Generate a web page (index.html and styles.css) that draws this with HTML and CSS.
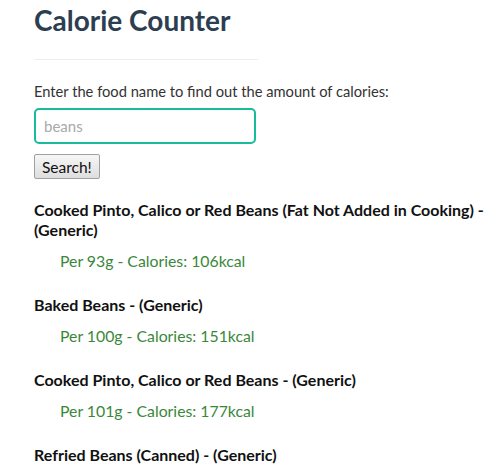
FILE: index.html
```html
<!DOCTYPE html>
<html>
<head>
<meta charset="utf-8">
<link rel="stylesheet" href="styles.css">
</head>
<body>
<div class="container">
  <h1 class="title">Calorie Counter</h1>
  <hr class="rule">
  <p class="prompt">Enter the food name to find out the amount of calories:</p>
  <input class="search" type="text" placeholder="beans">
  <div><button class="btn">Search!</button></div>
  <div class="results">
    <div class="item">
      <h4 class="name">Cooked Pinto, Calico or Red Beans (Fat Not Added in Cooking) - (Generic)</h4>
      <p class="kcal">Per 93g - Calories: 106kcal</p>
    </div>
    <div class="item">
      <h4 class="name">Baked Beans - (Generic)</h4>
      <p class="kcal">Per 100g - Calories: 151kcal</p>
    </div>
    <div class="item">
      <h4 class="name">Cooked Pinto, Calico or Red Beans - (Generic)</h4>
      <p class="kcal">Per 101g - Calories: 177kcal</p>
    </div>
    <div class="item">
      <h4 class="name">Refried Beans (Canned) - (Generic)</h4>
      <p class="kcal">Per 100g - Calories: 183kcal</p>
    </div>
  </div>
</div>
</body>
</html>
```
FILE: styles.css
```css
html, body {
  margin: 0;
  padding: 0;
  background: #fff;
}
body {
  font-family: Lato, "Liberation Sans", sans-serif;
  font-size: 15px;
  line-height: 1.42857;
  color: #2c3e50;
}
.container {
  padding: 0 12px 0 34px;
}
.title {
  margin: 0;
  padding-top: 2px;
  font-size: 28px;
  font-weight: 700;
  line-height: 36px;
  color: #2c3e50;
}
.rule {
  width: 224px;
  margin: 21px 0 0 0;
  border: 0;
  border-top: 1px solid #eeeeee;
}
.prompt {
  margin: 21px 0 6px 0;
  font-size: 14.7px;
  color: #333;
}
.search {
  display: block;
  box-sizing: border-box;
  width: 222px;
  height: 36px;
  border: 2px solid #18bc9c;
  border-radius: 5px;
  padding: 0 8px;
  font-family: Lato, sans-serif;
  font-size: 15px;
  color: #333;
  outline: none;
}
.search::placeholder {
  color: #a9a9a9;
}
.btn {
  margin-top: 10px;
  height: 25px;
  padding: 0 7px;
  font-family: Lato, sans-serif;
  font-size: 15.5px;
  color: #111;
  background: linear-gradient(#f6f6f6, #dedede);
  border: 1px solid #a0a0a0;
  border-radius: 2px;
}
.results {
  margin-top: 21px;
}
.item {
  margin-bottom: 24px;
}
.name {
  margin: 0;
  font-size: 16px;
  font-weight: 700;
  line-height: 20px;
  color: #111;
}
.kcal {
  margin: 11px 0 0 26px;
  font-size: 15.8px;
  line-height: 20px;
  color: #3a873a;
}
```
